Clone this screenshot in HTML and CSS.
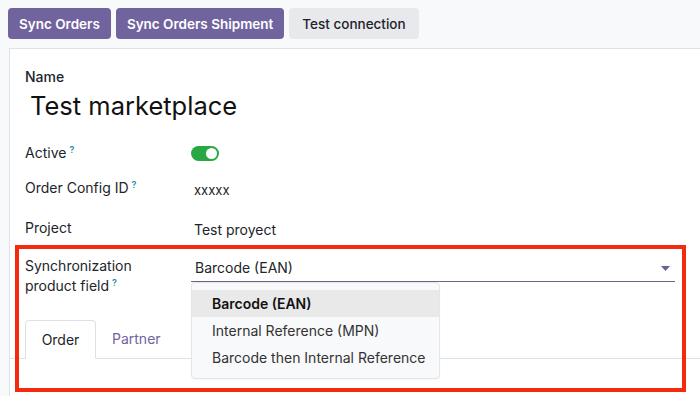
FILE: index.html
```html
<!DOCTYPE html>
<html>
<head>
<meta charset="utf-8">
<link rel="stylesheet" href="styles.css">
</head>
<body>
<div class="bar">
  <button class="btn primary">Sync Orders</button>
  <button class="btn primary">Sync Orders Shipment</button>
  <button class="btn secondary">Test connection</button>
</div>
<div class="sheet">
  <div class="name-label">Name</div>
  <div class="title">Test marketplace</div>
  <div class="rows">
    <div class="row r-active">
      <div class="lbl">Active<sup class="q">?</sup></div>
      <div class="val"><span class="toggle"><span class="knob"></span></span></div>
    </div>
    <div class="row r-cfg">
      <div class="lbl">Order Config ID<sup class="q">?</sup></div>
      <div class="val">xxxxx</div>
    </div>
    <div class="row r-proj">
      <div class="lbl">Project</div>
      <div class="val">Test proyect</div>
    </div>
    <div class="row r-sync">
      <div class="lbl">Synchronization<br>product field<sup class="q">?</sup></div>
      <div class="val select-wrap">
        <div class="select">
          <span>Barcode (EAN)</span>
          <svg class="caret" width="9" height="5" viewBox="0 0 9 5"><path d="M0 0h9L4.5 5z" fill="#6b6191"/></svg>
        </div>
        <div class="menu">
          <div class="opt active">Barcode (EAN)</div>
          <div class="opt">Internal Reference (MPN)</div>
          <div class="opt">Barcode then Internal Reference</div>
        </div>
      </div>
    </div>
  </div>
  <div class="tabs">
    <div class="tab current">Order</div>
    <div class="tab">Partner</div>
  </div>
  <div class="tab-body"></div>
</div>
<div class="highlight"></div>
</body>
</html>
```
FILE: styles.css
```css
* { box-sizing: border-box; }
html, body { margin: 0; padding: 0; }
body {
  width: 700px;
  height: 396px;
  overflow: hidden;
  background: #f8f9fa;
  font-family: Inter, Roboto, "Liberation Sans", sans-serif;
  color: #212529;
  font-size: 14px;
  position: relative;
}
.bar {
  display: flex;
  gap: 5px;
  padding: 8px 8px 0 8px;
}
.btn {
  height: 31px;
  border: none;
  border-radius: 4px;
  font-family: inherit;
  font-size: 13.5px;
  font-weight: 600;
  padding: 0 11px;
}
.primary { background: #71639e; color: #fff; }
.secondary { background: #e7e9ed; color: #1f2329; font-weight: 500; padding: 0 13px; }
.sheet {
  margin: 9px 0 0 9px;
  background: #fff;
  border: 1px solid #dee2e6;
  border-right: none;
  border-bottom: none;
  padding: 20px 0 0 0;
  height: 348px;
}
.name-label {
  padding-left: 15px;
  font-size: 14px;
  font-weight: 500;
  line-height: 16px;
}
.title {
  padding-left: 20px;
  font-size: 25.5px;
  line-height: 42px;
  color: #111;
}
.rows { padding-left: 15px; margin-top: 9px; }
.row { display: flex; }
.lbl {
  width: 166px;
  font-weight: 400;
  line-height: 20px;
  color: #212529;
}
.val { flex: 1; line-height: 20px; }
.q { color: #1f8bb0; font-size: 9px; font-weight: 600; margin-left: 3px; vertical-align: top; position: relative; top: -3px; }
.r-active { height: 36px; padding-top: 7px; }
.r-cfg { height: 40px; padding-top: 6px; }
.r-cfg .val, .r-proj .val { padding-left: 3px; }
.r-cfg .val { padding-top: 2px; font-size: 13px; }
.r-proj { height: 36px; padding-top: 6px; }
.r-proj .val { padding-top: 2px; }
.r-sync { height: 72px; padding-top: 8px; }
.toggle {
  display: inline-block;
  width: 28px;
  height: 15px;
  border-radius: 8px;
  background: #28a745;
  position: relative;
  margin-top: 3px;
}
.knob {
  position: absolute;
  right: 2px;
  top: 2px;
  width: 11px;
  height: 11px;
  border-radius: 50%;
  background: #fff;
}
.select-wrap { position: relative; padding-right: 25px; }
.select {
  display: flex;
  align-items: center;
  justify-content: space-between;
  border-bottom: 1px solid #6c6386;
  height: 26px;
  padding: 0 5px 2px 4px;
}
.caret { margin-top: 2px; }
.menu {
  position: absolute;
  left: 0;
  top: 26px;
  width: 249px;
  height: 97px;
  background: #f8f9fa;
  border: 1px solid #e3e6ea;
  border-radius: 4px;
  padding-top: 7px;
  box-shadow: 0 1px 2px rgba(0,0,0,0.04);
}
.opt {
  height: 27px;
  line-height: 27px;
  padding-left: 20px;
  color: #333;
}
.opt.active { background: #e9e9ea; font-weight: 600; color: #111; }
.tabs {
  display: flex;
  padding-left: 15px;
  border-bottom: 1px solid #dee2e6;
  height: 39px;
}
.tab {
  padding: 0 16px;
  line-height: 38px;
  color: #71639e;
}
.tab.current {
  color: #212529;
  background: #fff;
  border: 1px solid #dee2e6;
  border-bottom-color: #fff;
  border-radius: 4px 4px 0 0;
  height: 39px;
  width: 71px;
  text-align: center;
  padding: 0;
}
.highlight {
  position: absolute;
  left: 15px;
  top: 245px;
  width: 671px;
  height: 147px;
  border: 4px solid #f52a0c;
  pointer-events: none;
}
```
